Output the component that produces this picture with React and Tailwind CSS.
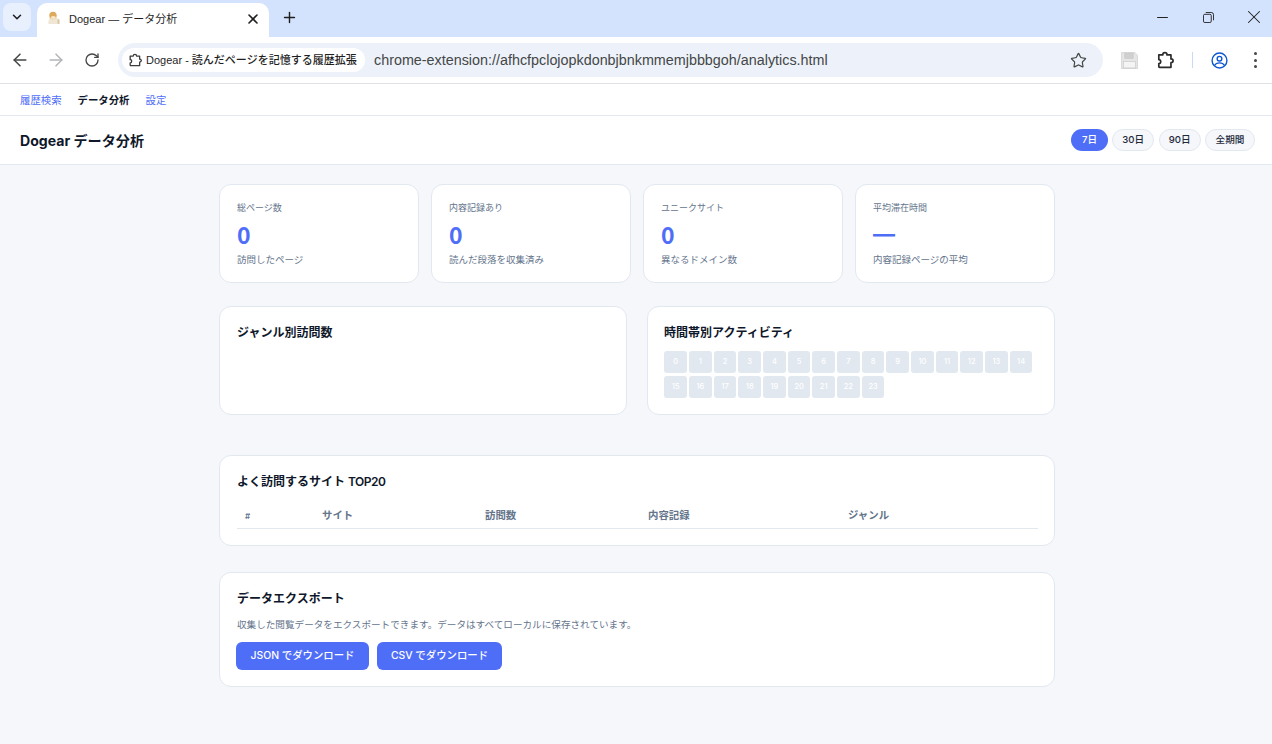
import React from "react";
import { ArrowLeft, ArrowRight, RotateCw, Star, Plus, X, ChevronDown, Minus } from "lucide-react";

const Puzzle = ({ className }) => (
  <svg viewBox="0 0 16 16" className={`shrink-0 ${className}`} fill="none" stroke="currentColor" strokeWidth="1.5" strokeLinejoin="round">
    <path d="M2.500 3.500H6c0-1.200.7-2 1.900-2s1.900.8 1.900 2h3.500V7c1.100 0 1.900.6 1.900 1.700s-.8 1.700-1.900 1.700v4.100H3.200c-.4 0-.7-.3-.7-.7v-2.600c1 0 1.700-.7 1.700-1.800S3.500 7.600 2.500 7.600z" />
  </svg>
);

const Favicon = () => (
  <svg viewBox="0 0 14 14" className="w-[14px] h-[14px] shrink-0 mb-[2px]">
    <path d="M1.500 13c-.5-3 .5-5.500 2-6.500h6c2 .8 3.500 3.500 3 6.500z" fill="#efe6d6" />
    <ellipse cx="6" cy="4.500" rx="3.700" ry="3.800" fill="#dfa95c" />
    <ellipse cx="6.300" cy="6.500" rx="2.600" ry="1.500" fill="#f6e7c9" />
    <rect x="10.500" y="8" width="2" height="5" rx="1" fill="#d9c7a6" />
  </svg>
);

const Stat = ({ label, value, sub, dash }) => (
  <div className="bg-white border border-[#e2e8f0] rounded-[12px] h-[99px] px-[17px] pt-[16px]">
    <div className="text-[9px] leading-[13px] text-[#64748b]">{label}</div>
    {dash ? (
      <div className="text-[22px] leading-[28px] font-bold text-[#4f6ef7] mt-[6px]">{value}</div>
    ) : (
      <div
        className="text-[23px] leading-[28px] font-bold text-[#4f6ef7] mt-[6px]"
        style={{ fontFamily: "'Noto Sans CJK JP', sans-serif" }}
      >
        {value}
      </div>
    )}
    <div className="text-[9.5px] leading-[14px] text-[#64748b] mt-[5px]">{sub}</div>
  </div>
);

const Title = ({ children, className = "" }) => (
  <div className={`text-[12px] leading-[18px] font-semibold text-[#0f172a] ${className}`}>{children}</div>
);

const Pill = ({ children, active, width }) => (
  <div
    className={`h-[22px] rounded-full text-[9.6px] font-medium flex items-center justify-center ${width} ${
      active ? "bg-[#4f6ef7] text-white" : "bg-[#f5f7fb] border border-[#e2e8f0] text-[#1e293b]"
    }`}
  >
    {children}
  </div>
);

const hours = Array.from({ length: 24 }, (_, i) => i);

export default function App() {
  return (
    <div
      className="w-[1272px] h-[744px] overflow-hidden flex flex-col bg-[#f5f7fb]"
      style={{ fontFamily: "Inter, 'Noto Sans CJK JP', sans-serif" }}
    >
      {/* tab strip */}
      <div className="h-[37px] shrink-0 bg-[#d3e3fd] flex items-start">
        <div className="w-[37px] h-[37px] pl-[3px] pt-[3px]">
          <div className="w-[28px] h-[28px] rounded-[8px] bg-[#e8f0fe] flex items-center justify-center text-[#1f1f1f]">
            <ChevronDown size={14} strokeWidth={2.6} />
          </div>
        </div>
        <div className="w-[232px] h-[34px] mt-[3px] bg-white rounded-t-[10px] flex items-center pl-[10px] pr-[8px] pb-[2px]">
          <Favicon />
          <span className="ml-[8px] text-[11px] text-[#1f1f1f] flex-1 whitespace-nowrap" style={{ fontFamily: "'Liberation Sans', 'Noto Sans CJK JP', sans-serif" }}>
            Dogear — データ分析
          </span>
          <X size={16} strokeWidth={2.4} className="text-[#1f1f1f]" />
        </div>
        <div className="w-[40px] h-[34px] flex items-center justify-center text-[#1f1f1f]">
          <Plus size={17} strokeWidth={2} />
        </div>
        <div className="flex-1" />
        <div className="h-[34px] flex items-center text-[#1f1f1f]">
          <div className="w-[36px] flex justify-center">
            <Minus size={17} strokeWidth={1.4} />
          </div>
          <div className="w-[56px] flex justify-center">
            <svg viewBox="0 0 12 12" className="w-[11px] h-[11px]" fill="none" stroke="currentColor" strokeWidth="1">
              <rect x=".5" y="2.500" width="8.500" height="9" rx="1.500" />
              <path d="M3 .5h6a2.500 2.500 0 0 1 2.500 2.500v6" />
            </svg>
          </div>
          <div className="w-[36px] flex justify-center">
            <X size={22} strokeWidth={1.1} />
          </div>
        </div>
      </div>

      {/* toolbar */}
      <div className="h-[47px] shrink-0 bg-white border-b border-[#dfe1e5] flex items-center">
        <div className="w-[38px] pl-[1px] flex justify-center text-[#444746]">
          <ArrowLeft size={20} strokeWidth={1.8} />
        </div>
        <div className="w-[36px] flex justify-center text-[#b3b5b7]">
          <ArrowRight size={20} strokeWidth={1.8} />
        </div>
        <div className="w-[36px] pr-[1px] flex justify-center text-[#444746]">
          <RotateCw size={16} strokeWidth={2} />
        </div>
        <div className="ml-[8px] w-[985px] h-[34px] rounded-full bg-[#edf2fa] flex items-center pl-[4px] pr-[16px]">
          <div className="h-[24px] w-[243px] rounded-full bg-white flex items-center pl-[6px] text-[#1f1f1f]">
            <Puzzle className="w-[14px] h-[14px] text-[#3c3c3c]" />
            <span className="ml-[4px] text-[11px] font-medium whitespace-nowrap" style={{ fontFamily: "'Liberation Sans', 'Noto Sans CJK JP', sans-serif" }}>
              Dogear - 読んだページを記憶する履歴拡張
            </span>
          </div>
          <span className="ml-[9px] pt-[1px] text-[14.35px] text-[#444746] flex-1 whitespace-nowrap" style={{ fontFamily: "'Liberation Sans', sans-serif" }}>
            chrome-extension://afhcfpclojopkdonbjbnkmmemjbbbgoh/analytics.html
          </span>
          <Star size={17} strokeWidth={1.7} className="text-[#444746]" />
        </div>
        <div className="ml-[17px] w-[18px] flex justify-center">
          <svg viewBox="0 0 16 16" className="w-[17px] h-[17px]" fill="#dadada" stroke="#c9c9c9" strokeWidth=".6">
            <path d="M.5.5h12.500l2.500 2.500v12.500H.5z" fill="#e6e6e6" />
            <rect x="3.500" y="1" width="8" height="5" fill="#d0d0d0" />
            <rect x="2.500" y="9" width="11" height="6" fill="#f4f4f4" />
          </svg>
        </div>
        <div className="ml-[18px] text-[#2b2b2b]">
          <Puzzle className="w-[18px] h-[18px]" />
        </div>
        <div className="ml-[18px] w-[1px] h-[16px] bg-[#c7dbf7]" />
        <div className="ml-[18px]">
          <svg viewBox="0 0 16 16" className="w-[17px] h-[17px]" fill="none" stroke="#0b57d0" strokeWidth="1.300">
            <circle cx="8" cy="8" r="7" />
            <circle cx="8" cy="6.300" r="2.200" />
            <path d="M3.300 12.700c1-1.900 2.800-2.500 4.700-2.500s3.700.6 4.700 2.500" />
          </svg>
        </div>
        <div className="ml-[26px] flex flex-col gap-[3.500px]">
          <div className="w-[3px] h-[3px] rounded-full bg-[#444746]" />
          <div className="w-[3px] h-[3px] rounded-full bg-[#444746]" />
          <div className="w-[3px] h-[3px] rounded-full bg-[#444746]" />
        </div>
      </div>

      {/* nav */}
      <div className="h-[32px] shrink-0 bg-white border-b border-[#e2e8f0] flex items-center pl-[20px] gap-[16px] text-[10.4px] pt-[2px]">
        <span className="text-[#4f6ef7]">履歴検索</span>
        <span className="font-semibold text-[#0f172a]">データ分析</span>
        <span className="text-[#4f6ef7]">設定</span>
      </div>

      {/* header */}
      <div className="h-[49px] shrink-0 bg-white border-b border-[#e2e8f0] flex items-center justify-between pl-[20px] pr-[17px]">
        <div className="text-[14.1px] font-bold text-[#0f172a] pt-[1px]">Dogear データ分析</div>
        <div className="flex gap-[4.4px]">
          <Pill active width="w-[36.500px]">7日</Pill>
          <Pill width="w-[42px]">30日</Pill>
          <Pill width="w-[42px]">90日</Pill>
          <Pill width="w-[50px]">全期間</Pill>
        </div>
      </div>

      {/* main */}
      <div className="w-[836px] ml-[219px] pt-[19px] flex flex-col">
        <div className="grid grid-cols-4 gap-[12px]">
          <Stat label="総ページ数" value="0" sub="訪問したページ" />
          <Stat label="内容記録あり" value="0" sub="読んだ段落を収集済み" />
          <Stat label="ユニークサイト" value="0" sub="異なるドメイン数" />
          <Stat label="平均滞在時間" value="—" sub="内容記録ページの平均" dash />
        </div>

        <div className="grid grid-cols-2 gap-[20px] mt-[23px]">
          <div className="bg-white border border-[#e2e8f0] rounded-[12px] h-[109px] px-[17px] pt-[17px]">
            <Title>ジャンル別訪問数</Title>
          </div>
          <div className="bg-white border border-[#e2e8f0] rounded-[12px] h-[109px] px-[16px] pt-[17px]">
            <Title>時間帯別アクティビティ</Title>
            <div className="w-[368px] ml-[0.4px] mt-[9px] grid grid-cols-[repeat(15,1fr)] gap-x-[2px] gap-y-[3px]">
              {hours.map((h) => (
                <div key={h} className="h-[22px] rounded-[3px] bg-[#e2e8f0] flex items-center justify-center text-[7.5px] font-medium text-white">
                  {h}
                </div>
              ))}
            </div>
          </div>
        </div>

        <div className="bg-white border border-[#e2e8f0] rounded-[12px] h-[91px] mt-[40px] pl-[17px] pr-[16px] pt-[17px]">
          <Title>
            よく訪問するサイト <span className="tracking-[-0.5px]">TOP20</span>
          </Title>
          <div className="mt-[12px] h-[26px] border-b border-[#e2e8f0] grid grid-cols-[77px_163px_163px_200px_198px] items-center text-[10.4px] font-semibold text-[#64748b]">
            <div className="pl-[8px] text-[8px]">#</div>
            <div className="pl-[8px]">サイト</div>
            <div className="pl-[8px]">訪問数</div>
            <div className="pl-[8px]">内容記録</div>
            <div className="pl-[8px]">ジャンル</div>
          </div>
        </div>

        <div className="bg-white border border-[#e2e8f0] rounded-[12px] h-[115px] mt-[26px] px-[16px] pt-[17px]">
          <Title className="pl-[1px]">データエクスポート</Title>
          <div className="pl-[1px] mt-[10px] text-[9.6px] leading-[14px] text-[#64748b]">
            収集した閲覧データをエクスポートできます。データはすべてローカルに保存されています。
          </div>
          <div className="flex gap-[8px] mt-[10px]">
            <div className="h-[28px] w-[133px] rounded-[6px] bg-[#4f6ef7] text-white text-[10.4px] font-medium flex items-center justify-center">
              JSON でダウンロード
            </div>
            <div className="h-[28px] w-[125px] rounded-[6px] bg-[#4f6ef7] text-white text-[10.4px] font-medium flex items-center justify-center">
              CSV でダウンロード
            </div>
          </div>
        </div>
      </div>
    </div>
  );
}
